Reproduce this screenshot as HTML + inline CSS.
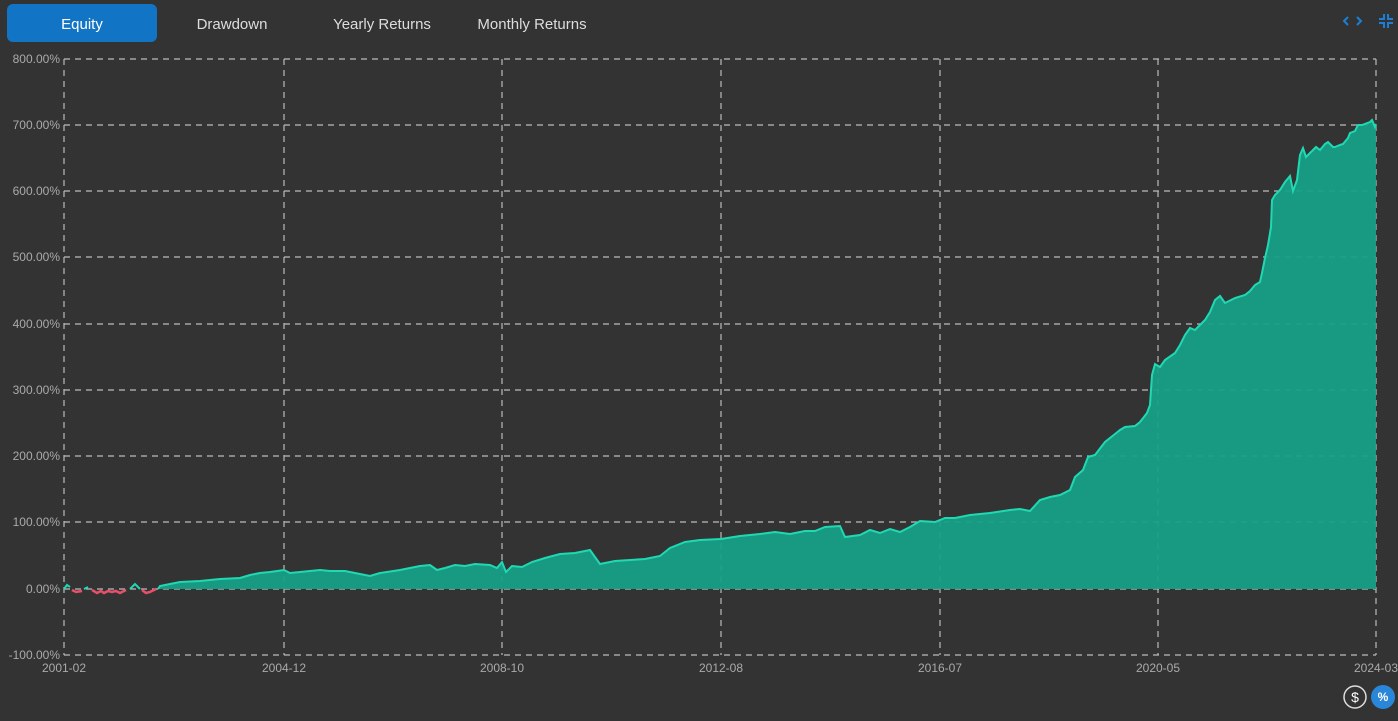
<!DOCTYPE html><html><head><style>
body{margin:0;background:#333;width:1398px;height:721px;overflow:hidden;font-family:"Liberation Sans",sans-serif;position:relative}
.tab{position:absolute;top:4px;height:38px;line-height:41px;text-align:center;color:#ddd;font-size:15px}
.act{background:#1274c4;color:#fff;border-radius:6px}
.yl{position:absolute;right:1338px;font-size:12px;color:#aaa;text-align:right;white-space:nowrap}
.xl{position:absolute;top:661px;font-size:12px;color:#aaa;transform:translateX(-50%);white-space:nowrap}
</style></head><body>
<div class="tab act" style="left:7px;width:150px">Equity</div>
<div class="tab" style="left:160px;width:144px">Drawdown</div>
<div class="tab" style="left:318px;width:128px">Yearly Returns</div>
<div class="tab" style="left:466px;width:132px">Monthly Returns</div>
<svg style="position:absolute;left:0;top:0" width="1398" height="721">
<g fill="none" stroke="#1b7fd8" stroke-width="2"><path d="M1348 17l-4 4 4 4M1357 17l4 4-4 4"/><path d="M1384 14v5h-5M1388 14v5h5M1384 28v-5h-5M1388 28v-5h5"/></g>
<g stroke="#bbb" stroke-width="1.2" stroke-dasharray="6,5" fill="none">
<path d="M64 59H1376M64 125H1376M64 191H1376M64 257H1376M64 324H1376M64 390H1376M64 456H1376M64 522H1376M64 589H1376M64 655H1376"/>
<path d="M64 59V655M284 59V655M502 59V655M721 59V655M940 59V655M1158 59V655M1376 59V655"/>
</g>
<path fill="#17a087" fill-opacity="0.95" d="M158 589 L160 586,170 584,180 582,200 581,220 579,240 578,250 575,260 573,270 572,284 570,290 573,300 572,320 570,330 571,345 571,355 573,370 576,380 573,400 570,410 568,420 566,430 565,437 570,445 568,455 565,465 566,475 564,490 565,497 568,502 562,506 572,512 566,522 567,532 562,545 558,560 554,575 553,590 550,600 564,615 561,630 560,645 559,660 556,670 548,685 542,700 540,721 539,740 536,760 534,775 532,790 534,805 531,815 531,825 527,840 526,845 537,860 535,870 530,880 533,890 529,900 532,910 527,920 521,935 522,945 518,955 518,970 515,990 513,1010 510,1020 509,1030 511,1040 500,1050 497,1060 495,1070 490,1075 477,1083 470,1088 457,1095 455,1105 442,1115 434,1120 430,1125 427,1135 426,1140 422,1147 413,1150 405,1152 375,1155 364,1160 367,1165 360,1175 353,1180 345,1185 335,1190 328,1195 330,1205 320,1210 312,1215 300,1220 296,1225 303,1235 298,1245 295,1250 291,1255 285,1260 282,1262 273,1265 258,1268 245,1271 227,1272 200,1275 195,1280 190,1285 182,1290 176,1293 191,1297 180,1300 155,1303 148,1306 157,1313 150,1316 147,1320 150,1325 144,1328 142,1333 147,1335 147,1340 145,1343 144,1348 138,1350 133,1355 131,1358 125,1362 125,1370 122,1372 120,1375 127,1376 124 L1376 589Z"/>
<path fill="none" stroke="#1fd9b3" stroke-width="2" d="M158 589 L160 586,170 584,180 582,200 581,220 579,240 578,250 575,260 573,270 572,284 570,290 573,300 572,320 570,330 571,345 571,355 573,370 576,380 573,400 570,410 568,420 566,430 565,437 570,445 568,455 565,465 566,475 564,490 565,497 568,502 562,506 572,512 566,522 567,532 562,545 558,560 554,575 553,590 550,600 564,615 561,630 560,645 559,660 556,670 548,685 542,700 540,721 539,740 536,760 534,775 532,790 534,805 531,815 531,825 527,840 526,845 537,860 535,870 530,880 533,890 529,900 532,910 527,920 521,935 522,945 518,955 518,970 515,990 513,1010 510,1020 509,1030 511,1040 500,1050 497,1060 495,1070 490,1075 477,1083 470,1088 457,1095 455,1105 442,1115 434,1120 430,1125 427,1135 426,1140 422,1147 413,1150 405,1152 375,1155 364,1160 367,1165 360,1175 353,1180 345,1185 335,1190 328,1195 330,1205 320,1210 312,1215 300,1220 296,1225 303,1235 298,1245 295,1250 291,1255 285,1260 282,1262 273,1265 258,1268 245,1271 227,1272 200,1275 195,1280 190,1285 182,1290 176,1293 191,1297 180,1300 155,1303 148,1306 157,1313 150,1316 147,1320 150,1325 144,1328 142,1333 147,1335 147,1340 145,1343 144,1348 138,1350 133,1355 131,1358 125,1362 125,1370 122,1372 120,1375 127,1376 124"/>
<path fill="none" stroke="#1fd9b3" stroke-width="2" d="M64 589 L67 585,70 587 M84 589 L88 587 M130 589 L135 584 140 589"/>
<path fill="none" stroke="#e8506a" stroke-width="2.5" d="M72 590 L76 592,82 591 M92 590 L97 593,101 591,104 593,108 591,112 592,116 591,120 593,126 590 M142 590 L146 593,150 592,156 589"/>
<circle cx="1355" cy="697" r="11" fill="none" stroke="#ddd" stroke-width="1.5"/>
<text x="1355" y="702" font-size="14" fill="#fff" text-anchor="middle" font-family="Liberation Sans">$</text>
<circle cx="1383" cy="697" r="12" fill="#2a86d8"/>
<text x="1383" y="701" font-size="12" font-weight="bold" fill="#fff" text-anchor="middle" font-family="Liberation Sans">%</text>
</svg>
<div class="yl" style="top:52px">800.00%</div>
<div class="yl" style="top:118px">700.00%</div>
<div class="yl" style="top:184px">600.00%</div>
<div class="yl" style="top:250px">500.00%</div>
<div class="yl" style="top:317px">400.00%</div>
<div class="yl" style="top:383px">300.00%</div>
<div class="yl" style="top:449px">200.00%</div>
<div class="yl" style="top:515px">100.00%</div>
<div class="yl" style="top:582px">0.00%</div>
<div class="yl" style="top:648px">-100.00%</div>
<div class="xl" style="left:64px">2001-02</div>
<div class="xl" style="left:284px">2004-12</div>
<div class="xl" style="left:502px">2008-10</div>
<div class="xl" style="left:721px">2012-08</div>
<div class="xl" style="left:940px">2016-07</div>
<div class="xl" style="left:1158px">2020-05</div>
<div class="xl" style="left:1376px">2024-03</div>
</body></html>
